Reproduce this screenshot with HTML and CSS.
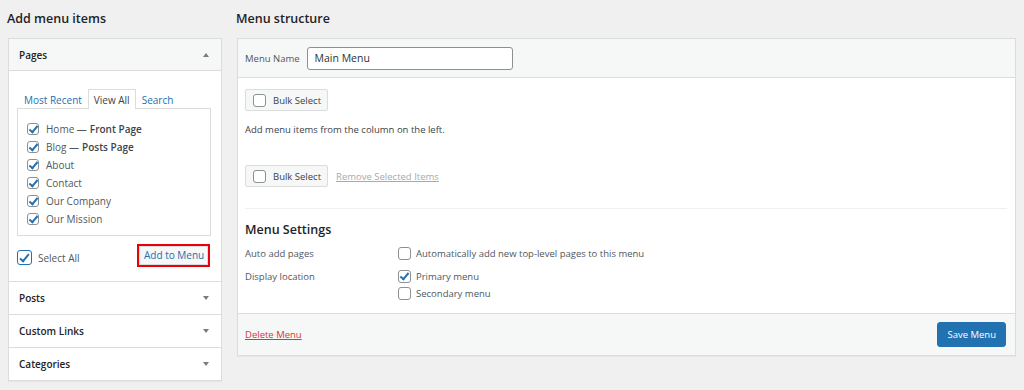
FILE: index.html
```html
<!DOCTYPE html>
<html>
<head>
<meta charset="utf-8">
<link rel="stylesheet" href="styles.css">
</head>
<body>
<div class="page">
  <div class="col-left">
    <h2 class="col-title">Add menu items</h2>
    <div class="panel">
      <div class="acc-head open"><span>Pages</span><span class="arrow up"></span></div>
      <div class="acc-body">
        <div class="tabs">
          <span class="tab">Most Recent</span>
          <span class="tab active">View All</span>
          <span class="tab">Search</span>
        </div>
        <div class="list">
          <label class="item"><span class="cb checked"></span>Home — <b>Front Page</b></label>
          <label class="item"><span class="cb checked"></span>Blog — <b>Posts Page</b></label>
          <label class="item"><span class="cb checked"></span>About</label>
          <label class="item"><span class="cb checked"></span>Contact</label>
          <label class="item"><span class="cb checked"></span>Our Company</label>
          <label class="item"><span class="cb checked"></span>Our Mission</label>
        </div>
        <div class="list-actions">
          <label class="select-all"><span class="cb big checked"></span>Select All</label>
          <span class="add-btn">Add to Menu</span>
        </div>
      </div>
      <div class="acc-head"><span>Posts</span><span class="arrow"></span></div>
      <div class="acc-head"><span>Custom Links</span><span class="arrow"></span></div>
      <div class="acc-head last"><span>Categories</span><span class="arrow"></span></div>
    </div>
  </div>
  <div class="col-right">
    <h2 class="col-title">Menu structure</h2>
    <div class="panel menu-panel">
      <div class="menu-head">
        <span class="menu-name-label">Menu Name</span>
        <span class="menu-name-input">Main Menu</span>
      </div>
      <div class="menu-body">
        <div class="bulk"><span class="bulk-btn"><span class="cb"></span>Bulk Select</span></div>
        <p class="hint">Add menu items from the column on the left.</p>
        <div class="bulk bulk2"><span class="bulk-btn"><span class="cb"></span>Bulk Select</span><span class="remove">Remove Selected Items</span></div>
        <div class="settings">
          <h3>Menu Settings</h3>
          <div class="set-row">
            <div class="set-label">Auto add pages</div>
            <div class="set-opts"><label class="opt"><span class="cb"></span>Automatically add new top-level pages to this menu</label></div>
          </div>
          <div class="set-row">
            <div class="set-label">Display location</div>
            <div class="set-opts">
              <label class="opt"><span class="cb checked"></span>Primary menu</label>
              <label class="opt"><span class="cb"></span>Secondary menu</label>
            </div>
          </div>
        </div>
      </div>
      <div class="menu-foot">
        <span class="delete">Delete Menu</span>
        <span class="save">Save Menu</span>
      </div>
    </div>
  </div>
</div>
</body>
</html>
```
FILE: styles.css
```css
* { box-sizing: border-box; }
html, body { margin: 0; padding: 0; }
body {
  background: #f0f0f1;
  font-family: "Open Sans", "Noto Sans", sans-serif;
  font-size: 10px;
  color: #3c434a;
  width: 1024px;
  height: 390px;
  overflow: hidden;
}
.page {
  display: flex;
  gap: 15px;
  padding: 0 8px 0 8px;
}
.col-left { width: 214px; flex: none; }
.col-right { flex: 1; }
.col-title {
  margin: 0;
  height: 38px;
  line-height: 38px;
  font-size: 12.5px;
  font-weight: 600;
  color: #1d2327;
  margin-left: -1px;
}
.panel {
  background: #fff;
  border: 1px solid #dcdcde;
  box-shadow: 0 1px 1px rgba(0,0,0,.04);
}
.acc-head {
  height: 33px;
  display: flex;
  align-items: center;
  justify-content: space-between;
  padding: 0 12px 0 10px;
  font-size: 10px;
  font-weight: 600;
  color: #1d2327;
  border-top: 1px solid #dcdcde;
  white-space: nowrap;
}
.acc-head.open {
  border-top: 0;
  height: 32px;
  background: #f6f7f7;
  border-bottom: 1px solid #dcdcde;
}
.arrow {
  width: 0; height: 0;
  border-left: 3.5px solid transparent;
  border-right: 3.5px solid transparent;
  border-top: 4px solid #787c82;
}
.arrow.up { border-top: 0; border-bottom: 4px solid #787c82; }
.acc-body {
  padding: 18px 10px 14px 8px;
}
.tabs {
  display: flex;
  align-items: flex-end;
  height: 20px;
  padding-left: 1px;
  position: relative;
  z-index: 1;
  margin-bottom: -1px;
}
.tab {
  color: #2271b1;
  border: 1px solid transparent;
  border-bottom: 0;
  padding: 3px 5px 1px;
  line-height: 15px;
  white-space: nowrap;
}
.tab.active {
  color: #3c434a;
  border-color: #dcdcde;
  background: #fff;
}
.list {
  border: 1px solid #dcdcde;
  height: 128px;
  padding: 11px 9px;
}
.item {
  display: flex;
  align-items: center;
  height: 18px;
  color: #50575e;
  white-space: nowrap;
}
.item b { font-weight: 600; color: #3c434a; margin-left: 3px; }
.cb {
  display: inline-block;
  width: 12px;
  height: 12px;
  border: 1px solid #8c8f94;
  border-radius: 3px;
  margin-right: 7px;
  position: relative;
  flex: none;
  background: #fff;
}
.cb.checked::after {
  content: "";
  position: absolute;
  left: 3px;
  top: 0px;
  width: 3px;
  height: 7px;
  border-right: 2px solid #2271b1;
  border-bottom: 2px solid #2271b1;
  transform: rotate(40deg);
}
.cb.big {
  width: 15px;
  height: 15px;
  border: 1.5px solid #2271b1;
  border-radius: 3px;
  margin-right: 6px;
}
.cb.big::after { left: 4px; top: 1px; height: 8px; }
.list-actions {
  display: flex;
  justify-content: space-between;
  align-items: center;
  margin-top: 8px;
  height: 23px;
}
.select-all { display: flex; align-items: center; color: #50575e; position: relative; top: 2px; white-space: nowrap; }
.add-btn {
  border: 2px solid #e8000b;
  color: #2271b1;
  padding: 0 5px;
  height: 23px;
  line-height: 19px;
  background: #f6f7f7;
  width: 73px;
  text-align: center;
  white-space: nowrap;
  box-shadow: inset 0 0 0 1px #dcdcde;
  margin-right: 1px;
}
.menu-panel { height: 318px; display: flex; flex-direction: column; }
.menu-head {
  height: 39px;
  background: #f6f7f7;
  border-bottom: 1px solid #dcdcde;
  display: flex;
  align-items: center;
  padding: 0 7px;
  flex: none;
}
.menu-name-label { font-size: 9.5px; color: #50575e; margin-right: 7px; white-space: nowrap; }
.menu-name-input {
  width: 206px;
  height: 23px;
  border: 1px solid #8c8f94;
  border-radius: 3px;
  background: #fff;
  padding: 0 7px;
  line-height: 21px;
  font-size: 10.5px;
  color: #2c3338;
}
.menu-body { padding: 11px 8px 0 7px; flex: 1; }
.bulk { display: flex; align-items: center; height: 22px; }
.bulk-btn {
  display: inline-flex;
  align-items: center;
  height: 22px;
  border: 1px solid #dcdcde;
  border-radius: 2px;
  background: #f6f7f7;
  padding: 0 6px 0 7px;
  font-size: 9.5px;
  color: #3c434a;
  white-space: nowrap;
}
.bulk-btn .cb { width: 13px; height: 13px; border-radius: 3px; margin-right: 7px; }
.hint { margin: 0; height: 54px; padding-top: 8px; line-height: 22px; font-size: 9.5px; color: #3c434a; }
.remove {
  margin-left: 8px;
  color: #a7aaad;
  text-decoration: underline;
  font-size: 9.5px;
  white-space: nowrap;
}
.settings {
  margin-top: 21px;
  border-top: 1px solid #f0f0f1;
  padding-top: 12px;
}
.settings h3 {
  margin: 0 0 6px;
  font-size: 12.5px;
  font-weight: 600;
  color: #1d2327;
  line-height: 18px;
}
.set-row { display: flex; margin-bottom: 6px; }
.set-label { width: 153px; color: #50575e; font-size: 9.5px; line-height: 17px; white-space: nowrap; }
.set-opts { display: flex; flex-direction: column; }
.opt { display: flex; align-items: center; height: 17px; color: #50575e; font-size: 9.5px; white-space: nowrap; }
.opt .cb { margin-right: 5px; width: 13px; height: 13px; }
.menu-foot {
  height: 42px;
  flex: none;
  background: #f6f7f7;
  border-top: 1px solid #dcdcde;
  display: flex;
  align-items: center;
  justify-content: space-between;
  padding: 0 9px 0 7px;
}
.delete { color: #d63638; text-decoration: underline; font-size: 9.5px; white-space: nowrap; }
.save {
  background: #2271b1;
  border: 1px solid #2271b1;
  color: #fff;
  border-radius: 3px;
  height: 25px;
  line-height: 23px;
  padding: 0 9px;
  font-size: 9.5px;
  white-space: nowrap;
  text-align: center;
}
```
